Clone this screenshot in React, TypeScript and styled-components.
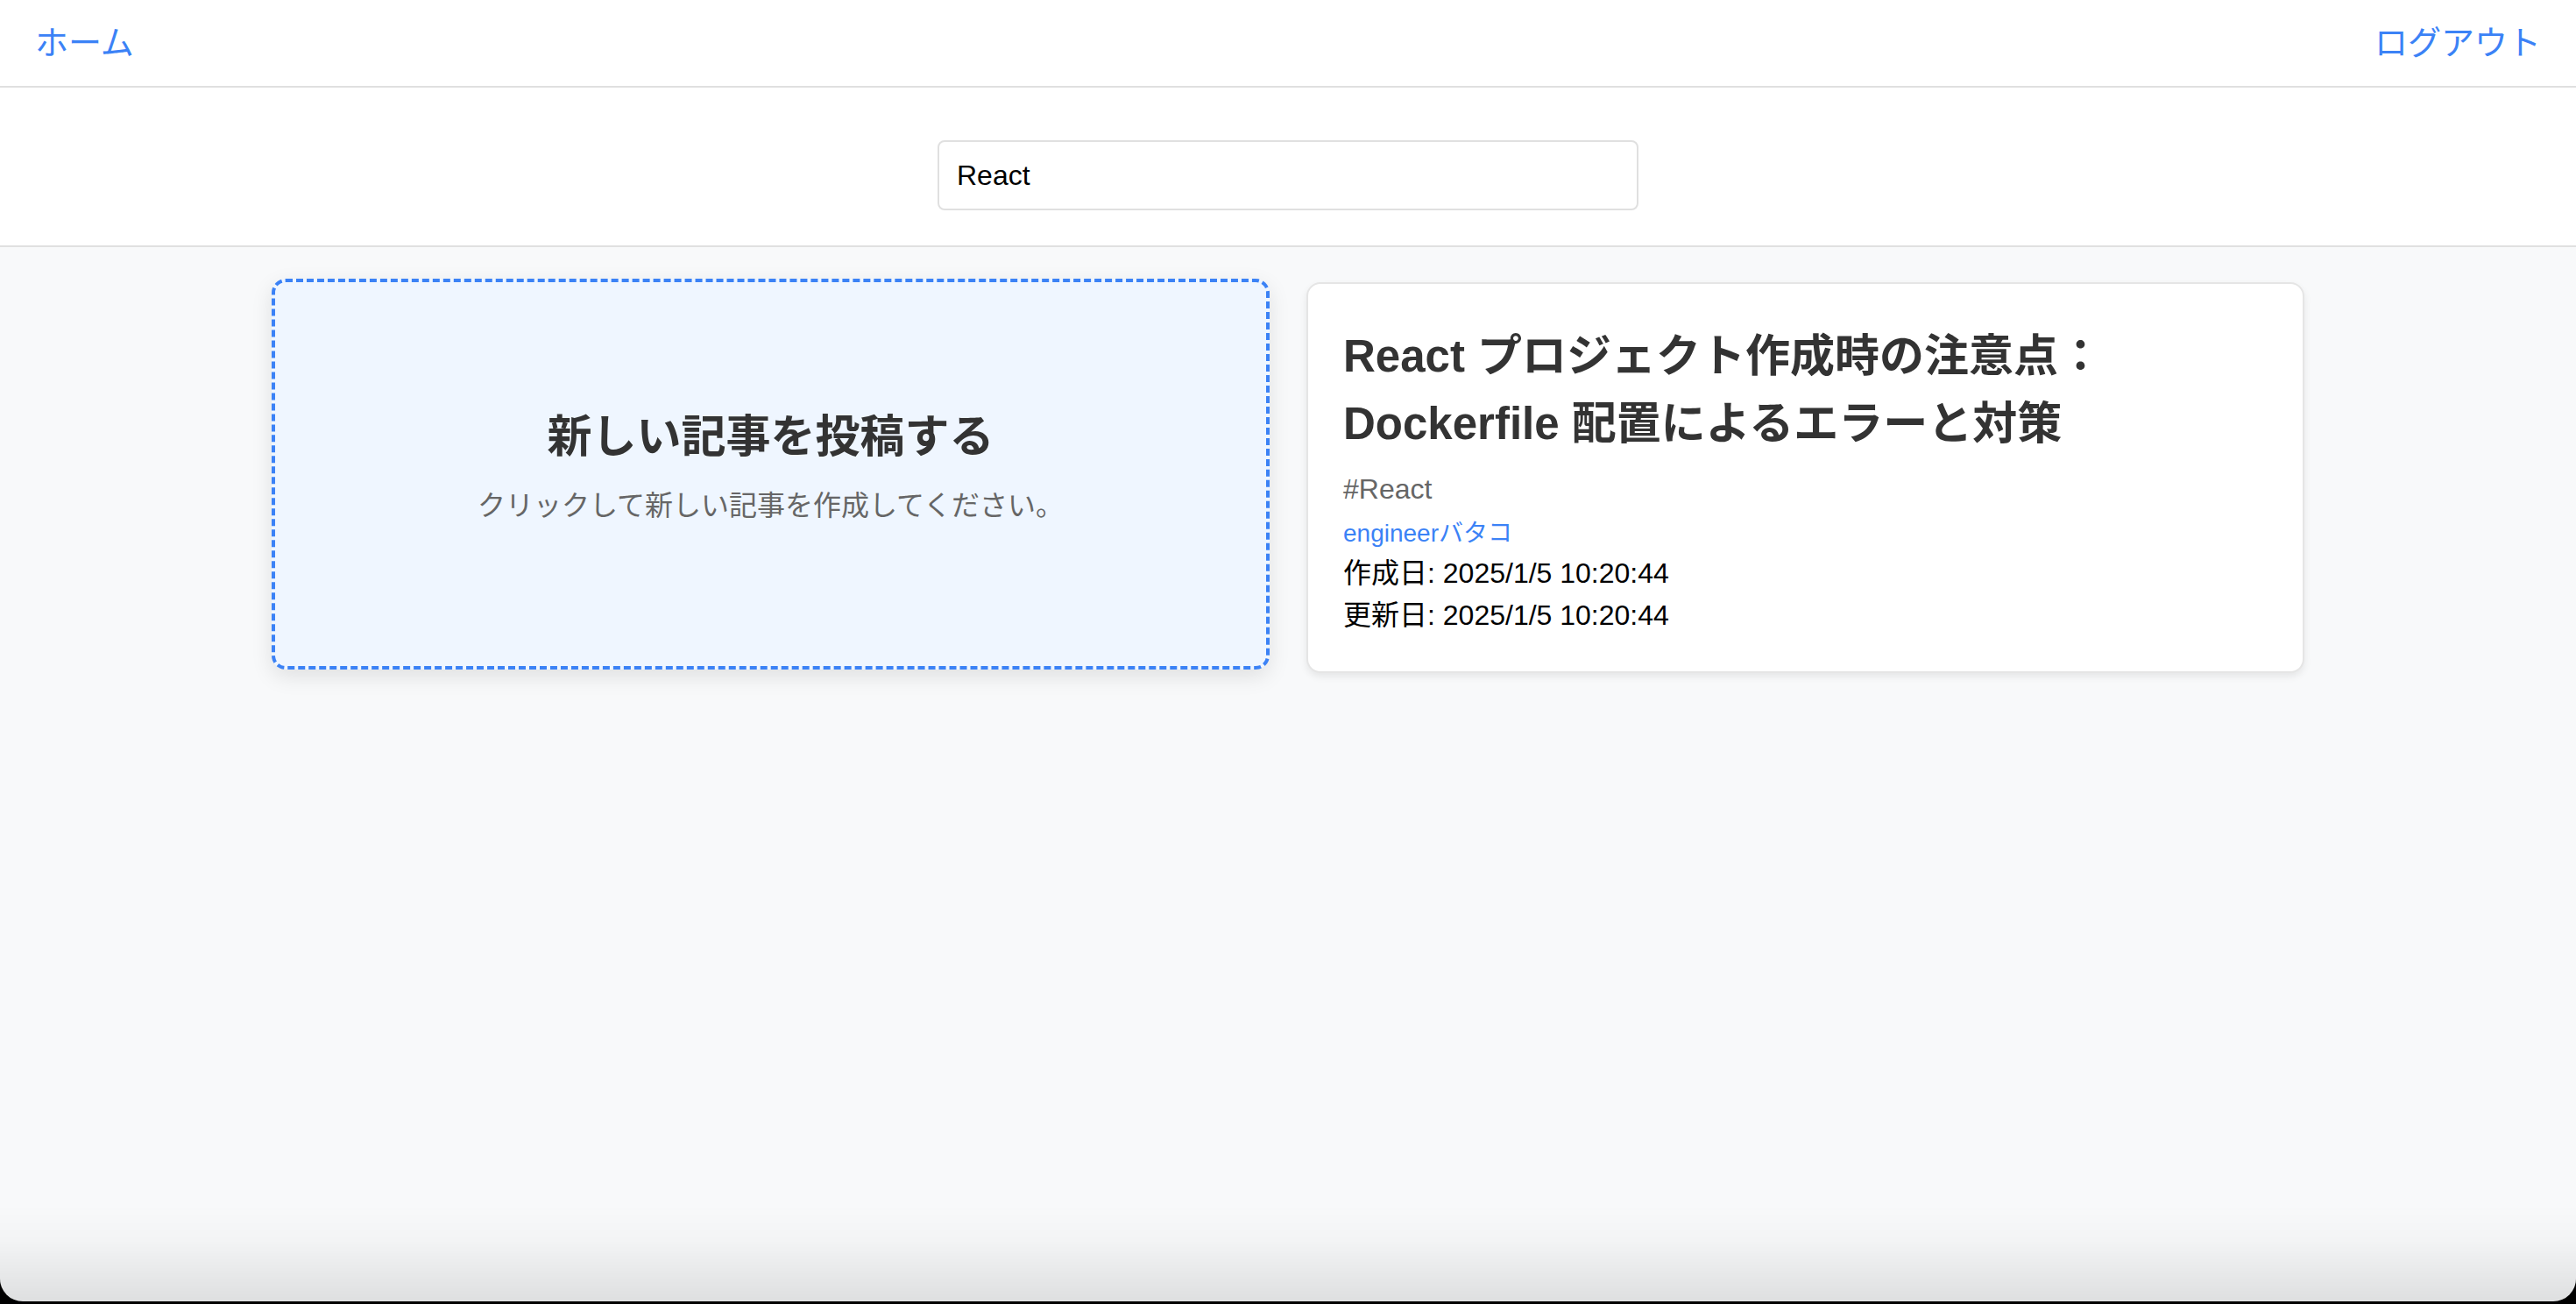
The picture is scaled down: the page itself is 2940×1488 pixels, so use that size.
import React, { useState } from 'react';
import styled, { createGlobalStyle } from 'styled-components';

const GlobalStyle = createGlobalStyle`
  * {
    box-sizing: border-box;
  }
  body {
    margin: 0;
    background-color: #f8f9fa;
    font-family: "Liberation Sans", "Noto Sans CJK JP", sans-serif;
    color: #000;
  }
`;

const Page = styled.div`
  min-height: 100vh;
  display: flex;
  flex-direction: column;
`;

const Header = styled.header`
  height: 100px;
  display: flex;
  justify-content: space-between;
  align-items: center;
  padding: 0 40px 8px;
  background-color: #fff;
  border-bottom: 2px solid #e0e0e0;
`;

const NavLink = styled.a`
  font-size: 38px;
  color: #3b82f6;
  text-decoration: none;
  cursor: pointer;
`;

const SearchSection = styled.section`
  display: flex;
  justify-content: center;
  padding: 60px 40px 40px;
  background-color: #fff;
  border-bottom: 2px solid #e0e0e0;
`;

const SearchInput = styled.input`
  width: 800px;
  height: 80px;
  padding: 0 20px;
  font-family: "Liberation Sans", "Noto Sans CJK JP", sans-serif;
  font-size: 32px;
  color: #000;
  border: 2px solid #e0e0e0;
  border-radius: 8px;
  outline: none;
`;

const Container = styled.main`
  width: 100%;
  max-width: 2400px;
  margin: 0 auto;
  padding: 40px;
`;

const PostGrid = styled.div`
  display: grid;
  grid-template-columns: repeat(2, 1fr);
  gap: 42px;
  align-items: stretch;
`;

const NewPostCard = styled.div`
  display: flex;
  flex-direction: column;
  justify-content: center;
  align-items: center;
  padding-bottom: 20px;
  background-color: #eff6ff;
  border: 4px dashed #3b82f6;
  border-radius: 16px;
  box-shadow: 0 8px 24px rgba(0, 0, 0, 0.1);
  transform: translateY(-4px);
  cursor: pointer;
`;

const NewPostTitle = styled.h2`
  margin: 0 0 16px;
  font-size: 51px;
  line-height: 1.5;
  font-weight: bold;
  color: #333;
`;

const NewPostText = styled.p`
  margin: 0;
  font-size: 32px;
  line-height: 1.5;
  color: #666;
`;

const ArticleCard = styled.article`
  padding: 45px 40px 40px;
  background-color: #fff;
  border: 2px solid #e5e5e5;
  border-radius: 16px;
  box-shadow: 0 4px 8px rgba(0, 0, 0, 0.08);
`;

const ArticleTitle = styled.h2`
  margin: 0 0 12px;
  font-size: 51px;
  line-height: 1.5;
  font-weight: bold;
  color: #333;
`;

const Tags = styled.div`
  display: flex;
  gap: 16px;
  margin-bottom: 6px;
`;

const Tag = styled.span`
  font-size: 32px;
  line-height: 1.5;
  color: #666;
`;

const Author = styled.a`
  display: block;
  font-size: 28px;
  line-height: 1.5;
  color: #3b82f6;
  text-decoration: none;
`;

const DateText = styled.p`
  margin: 0;
  font-size: 32px;
  line-height: 1.5;
  color: #000;
`;

const ScreenEdge = styled.div`
  position: fixed;
  top: 0;
  left: 0;
  right: 0;
  bottom: 3px;
  border-radius: 0 0 26px 26px;
  pointer-events: none;
  box-shadow: 0 0 0 60px #000;
  background: linear-gradient(
    to bottom,
    rgba(0, 0, 0, 0) calc(100% - 110px),
    rgba(0, 0, 0, 0.02) calc(100% - 70px),
    rgba(0, 0, 0, 0.1) 100%
  );
`;

interface IArticle {
  id: number;
  title: string;
  tags: string[];
  author: string;
  createdAt: string;
  updatedAt: string;
}

const articles: IArticle[] = [
  {
    id: 1,
    title: 'React プロジェクト作成時の注意点：Dockerfile 配置によるエラーと対策',
    tags: ['React'],
    author: 'engineerバタコ',
    createdAt: '2025/1/5 10:20:44',
    updatedAt: '2025/1/5 10:20:44',
  },
];

const App = () => {
  const [keyword, setKeyword] = useState('React');

  return (
    <Page>
      <GlobalStyle />
      <Header>
        <NavLink>ホーム</NavLink>
        <NavLink>ログアウト</NavLink>
      </Header>
      <SearchSection>
        <SearchInput
          value={keyword}
          onChange={(e) => setKeyword(e.target.value)}
        />
      </SearchSection>
      <Container>
        <PostGrid>
          <NewPostCard>
            <NewPostTitle>新しい記事を投稿する</NewPostTitle>
            <NewPostText>クリックして新しい記事を作成してください。</NewPostText>
          </NewPostCard>
          {articles.map((article) => (
            <ArticleCard key={article.id}>
              <ArticleTitle>{article.title}</ArticleTitle>
              <Tags>
                {article.tags.map((tag) => (
                  <Tag key={tag}>#{tag}</Tag>
                ))}
              </Tags>
              <Author>{article.author}</Author>
              <DateText>作成日: {article.createdAt}</DateText>
              <DateText>更新日: {article.updatedAt}</DateText>
            </ArticleCard>
          ))}
        </PostGrid>
      </Container>
      <ScreenEdge />
    </Page>
  );
};

export default App;
